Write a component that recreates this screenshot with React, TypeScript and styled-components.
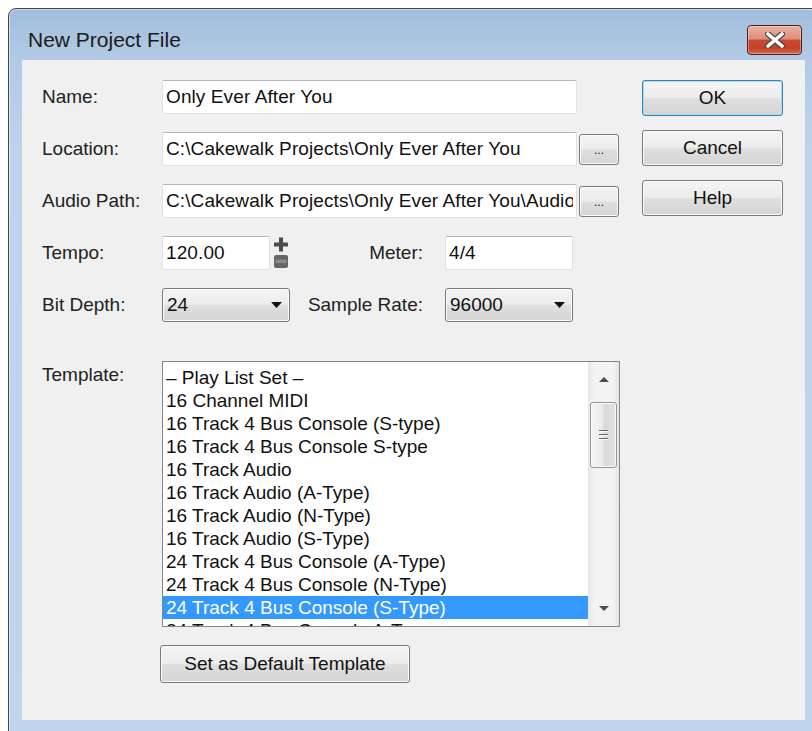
import React from 'react';
import styled, {createGlobalStyle} from "styled-components";

const GlobalStyle = createGlobalStyle`
  html, body {
    margin: 0;
    padding: 0;
    background: #ffffff;
    overflow: hidden;
  }
  #root {
    width: 812px;
    height: 731px;
    overflow: hidden;
  }
`

const Window = styled.div`
  margin: 8px 0 0 8px;
  width: 811px;
  height: 726px;
  box-sizing: border-box;
  border: 1px solid #3d4753;
  border-radius: 8px 8px 0 0;
  background: linear-gradient(to bottom, #a2bedc 0px, #b2cae5 50px, #bdd3eb 140px, #bfd5ec 100%);
  box-shadow: inset 0 0 0 1px rgba(255, 255, 255, 0.45);
  padding: 0 13px 13px 13px;
  display: flex;
  flex-direction: column;
  font-family: "Liberation Sans", Arial, sans-serif;
`

const TitleBar = styled.div`
  height: 51px;
  box-sizing: border-box;
  padding: 16px 3px 0 6px;
  display: flex;
  align-items: flex-start;
  justify-content: space-between;
`

const Title = styled.div`
  font-size: 21px;
  line-height: 30px;
  color: #1a1a1a;
`

const CloseButton = styled.div`
  width: 55px;
  height: 30px;
  box-sizing: border-box;
  border: 1px solid #4e1f1c;
  border-radius: 4px;
  background: linear-gradient(to bottom, #eab0a2 0%, #de8f7c 45%, #c9482e 52%, #c2432a 80%, #d56a4f 100%);
  box-shadow: inset 0 0 0 1px rgba(255, 255, 255, 0.35);
  display: flex;
  align-items: center;
  justify-content: center;
`

const Panel = styled.div`
  height: 660px;
  background: #f0f0f0;
  box-sizing: border-box;
  padding: 20px 22px 0 20px;
  display: flex;
  gap: 22px;
`

const Form = styled.div`
  width: 578px;
  display: flex;
  flex-direction: column;
`

const Row = styled.div`
  display: flex;
  align-items: center;
  height: 34px;
  margin-bottom: 18px;
`

const Label = styled.div`
  width: 120px;
  flex: none;
  font-size: 19px;
  color: #222;
`

const MidLabel = styled.div`
  width: 155px;
  box-sizing: border-box;
  padding-right: 22px;
  text-align: right;
  font-size: 19px;
  color: #222;
`

const TextField = styled.input<{ $w: number }>`
  width: ${p => p.$w}px;
  height: 34px;
  box-sizing: border-box;
  border: 1px solid #dde2e8;
  border-top-color: #b3b7be;
  border-radius: 2px;
  padding: 0 3px;
  font-family: "Liberation Sans", Arial, sans-serif;
  font-size: 19px;
  letter-spacing: 0.1px;
  color: #111;
  background: #ffffff;
  outline: none;
`

const ButtonFace = styled.button`
  box-sizing: border-box;
  border: 1px solid #7a7a7a;
  border-radius: 3px;
  background: linear-gradient(to bottom, #f4f4f4 0%, #ececec 48%, #dfdfdf 52%, #d4d4d4 100%);
  box-shadow: inset 0 0 0 1px #fbfbfb;
  font-family: "Liberation Sans", Arial, sans-serif;
  font-size: 19px;
  color: #111;
  padding: 0;
`

const PushButton = styled(ButtonFace)<{ $default?: boolean }>`
  width: 141px;
  height: 36px;
  border-color: ${p => (p.$default ? '#3c7fb1' : '#7a7a7a')};
  box-shadow: inset 0 0 0 1px ${p => (p.$default ? '#a9dbf6' : '#fbfbfb')};
`

const BrowseButton = styled(ButtonFace)`
  width: 40px;
  height: 31px;
  margin-left: 2px;
  font-size: 12px;
  display: flex;
  align-items: flex-end;
  justify-content: center;
  padding-bottom: 7px;
`

const TempoGroup = styled.div`
  width: 128px;
  display: flex;
  align-items: center;
  gap: 3px;
`

const Select = styled.div`
  width: 128px;
  height: 34px;
  box-sizing: border-box;
  border: 1px solid #7a7a7a;
  border-radius: 3px;
  background: linear-gradient(to bottom, #f4f4f4 0%, #ececec 48%, #dfdfdf 52%, #d4d4d4 100%);
  box-shadow: inset 0 0 0 1px #fbfbfb;
  display: flex;
  align-items: center;
  justify-content: space-between;
  padding: 0 7px 0 4px;
  font-size: 19px;
  color: #111;
`

const TemplateRow = styled.div`
  display: flex;
  align-items: flex-start;
  margin-top: 21px;
`

const TopLabel = styled(Label)`
  padding-top: 2px;
  line-height: 24px;
`

const ListBox = styled.div`
  width: 458px;
  height: 266px;
  box-sizing: border-box;
  border: 1px solid #828790;
  background: #ffffff;
  display: flex;
`

const Items = styled.div`
  flex: 1;
  padding-top: 4px;
  overflow: hidden;
`

const Item = styled.div<{ $selected?: boolean }>`
  height: 23px;
  line-height: 23px;
  padding-left: 3px;
  font-size: 19px;
  white-space: nowrap;
  color: ${p => (p.$selected ? '#ffffff' : '#111')};
  background: ${p => (p.$selected ? '#3399ff' : 'transparent')};
`

const ScrollBar = styled.div`
  width: 31px;
  display: flex;
  flex-direction: column;
  background: linear-gradient(to right, #e6e6e6, #f3f3f3 20%, #f3f3f3 80%, #e6e6e6);
`

const ScrollArrow = styled.div`
  height: 35px;
  display: flex;
  align-items: center;
  justify-content: center;
`

const Track = styled.div`
  flex: 1;
  padding: 5px 2px 0 2px;
`

const Thumb = styled.div`
  height: 66px;
  box-sizing: border-box;
  border: 1px solid #979797;
  border-radius: 3px;
  background: linear-gradient(to right, #f4f4f4 0%, #ebebeb 45%, #d9d9d9 55%, #e2e2e2 100%);
  box-shadow: inset 0 0 0 1px #fafafa;
  display: flex;
  flex-direction: column;
  align-items: center;
  justify-content: center;
  gap: 2px;
`

const Grip = styled.div`
  width: 9px;
  height: 1px;
  background: #666;
  border-bottom: 1px solid #f8f8f8;
`

const DefaultButton = styled(ButtonFace)`
  width: 250px;
  height: 38px;
  margin: 18px 0 0 118px;
`

const Buttons = styled.div`
  width: 141px;
  display: flex;
  flex-direction: column;
  gap: 14px;
`

const templates = [
    '\u2013 Play List Set \u2013',
    '16 Channel MIDI',
    '16 Track 4 Bus Console (S-type)',
    '16 Track 4 Bus Console S-type',
    '16 Track Audio',
    '16 Track Audio (A-Type)',
    '16 Track Audio (N-Type)',
    '16 Track Audio (S-Type)',
    '24 Track 4 Bus Console (A-Type)',
    '24 Track 4 Bus Console (N-Type)',
    '24 Track 4 Bus Console (S-Type)',
    '24 Track 4 Bus Console A-Type',
]

const selectedTemplate = 10

const Arrow = ({up = false, color = '#111', w = 11, h = 6}: { up?: boolean, color?: string, w?: number, h?: number }) => (
    <svg width={w} height={h} viewBox={`0 0 ${w} ${h}`}>
        <polygon points={up ? `0,${h} ${w / 2},0 ${w},${h}` : `0,0 ${w},0 ${w / 2},${h}`} fill={color}/>
    </svg>
)

// tempo nudge: plus on top, minus bar below
const SpinControl = () => (
    <svg width="16" height="34" viewBox="0 0 16 34">
        <rect x="6" y="1.5" width="4" height="14" fill="#4c4c4c"/>
        <rect x="1" y="6.5" width="14" height="4" fill="#4c4c4c"/>
        <rect x="1" y="19" width="14" height="13" rx="2" fill="#666"/>
        <rect x="2.5" y="23.5" width="11" height="3.5" fill="#8a8a8a"/>
    </svg>
)

const CloseGlyph = () => (
    <svg width="22" height="16" viewBox="0 0 22 16">
        <path d="M4 2 L18 14 M18 2 L4 14" stroke="#4a4a4a" strokeWidth="6" strokeLinecap="round"/>
        <path d="M4 2 L18 14 M18 2 L4 14" stroke="#ffffff" strokeWidth="3.6" strokeLinecap="round"/>
    </svg>
)

export default function App() {
    return (
        <>
            <GlobalStyle/>
            <Window>
                <TitleBar>
                    <Title>New Project File</Title>
                    <CloseButton><CloseGlyph/></CloseButton>
                </TitleBar>
                <Panel>
                    <Form>
                        <Row>
                            <Label>Name:</Label>
                            <TextField $w={415} readOnly defaultValue="Only Ever After You"/>
                        </Row>
                        <Row>
                            <Label>Location:</Label>
                            <TextField $w={415} readOnly defaultValue="C:\Cakewalk Projects\Only Ever After You"/>
                            <BrowseButton>...</BrowseButton>
                        </Row>
                        <Row>
                            <Label>Audio Path:</Label>
                            <TextField $w={415} readOnly
                                       defaultValue="C:\Cakewalk Projects\Only Ever After You\Audio"/>
                            <BrowseButton>...</BrowseButton>
                        </Row>
                        <Row>
                            <Label>Tempo:</Label>
                            <TempoGroup>
                                <TextField $w={108} readOnly defaultValue="120.00"/>
                                <SpinControl/>
                            </TempoGroup>
                            <MidLabel>Meter:</MidLabel>
                            <TextField $w={128} readOnly defaultValue="4/4"/>
                        </Row>
                        <Row>
                            <Label>Bit Depth:</Label>
                            <Select>24<Arrow/></Select>
                            <MidLabel>Sample Rate:</MidLabel>
                            <Select>96000<Arrow/></Select>
                        </Row>
                        <TemplateRow>
                            <TopLabel>Template:</TopLabel>
                            <ListBox>
                                <Items>
                                    {templates.map((t, i) => (
                                        <Item key={t} $selected={i === selectedTemplate}>{t}</Item>
                                    ))}
                                </Items>
                                <ScrollBar>
                                    <ScrollArrow><Arrow up color="#4d4d4d" w={10} h={5}/></ScrollArrow>
                                    <Track>
                                        <Thumb>
                                            <Grip/>
                                            <Grip/>
                                            <Grip/>
                                        </Thumb>
                                    </Track>
                                    <ScrollArrow><Arrow color="#4d4d4d" w={10} h={5}/></ScrollArrow>
                                </ScrollBar>
                            </ListBox>
                        </TemplateRow>
                        <DefaultButton>Set as Default Template</DefaultButton>
                    </Form>
                    <Buttons>
                        <PushButton $default>OK</PushButton>
                        <PushButton>Cancel</PushButton>
                        <PushButton>Help</PushButton>
                    </Buttons>
                </Panel>
            </Window>
        </>
    )
}
